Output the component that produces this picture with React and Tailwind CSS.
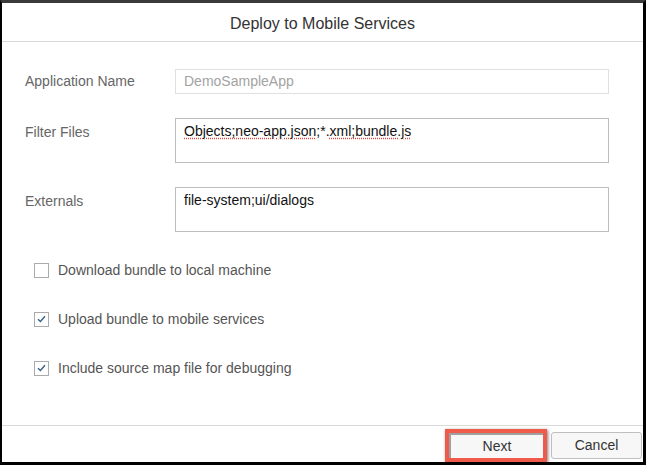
import React from 'react'

const font = { fontFamily: '"Liberation Sans", Arial, sans-serif' }

const Check = ({ checked, label }) => (
  <div className="flex items-center h-[20px]">
    <div className="w-[15px] h-[15px] border border-[#ababab] bg-white flex items-center justify-center ml-[9px]">
      {checked && (
        <svg width="9" height="8" viewBox="0 0 9 8">
          <path d="M1 4.2 L3.4 6.5 L8 1.2" fill="none" stroke="#346187" strokeWidth="1.4" />
        </svg>
      )}
    </div>
    <span className="ml-[9px] text-[14px] text-[#555]">{label}</span>
  </div>
)

const App = () => {
  return (
    <div className="w-[646px] h-[465px] bg-black" style={font}>
      <div className="h-full border-l-2 border-t-[3px] border-r-[3px] border-b-[3px] border-t-[#3a3a3a] border-l-black border-r-black border-b-black bg-white flex flex-col">
        {/* Header */}
        <div className="h-[39px] flex items-center justify-center border-b border-[#d9d9d9] pt-[3px]">
          <h1 className="text-[16px] text-[#333]">Deploy to Mobile Services</h1>
        </div>

        {/* Body */}
        <div className="flex-1 pl-[23px] pr-[34px] pt-[27px]">
          <div className="grid grid-cols-[150px_1fr] gap-y-[24px]">
            <div className="text-[14px] text-[#666] flex items-center">Application Name</div>
            <div className="h-[25px] border border-[#e0e0e0] px-[8px] flex items-center text-[14px] text-[#a3a3a3]">
              DemoSampleApp
            </div>

            <div className="text-[14px] text-[#666] pt-[4px]">Filter Files</div>
            <div className="h-[45px] border border-[#bdbdbd] px-[8px] pt-[2px] text-[14px] text-[#111]">
              <span className="underline decoration-dotted decoration-[#e0453a] underline-offset-2">Objects;neo-app.json</span>;*.
              <span className="underline decoration-dotted decoration-[#e0453a] underline-offset-2">xml;bundle.js</span>
            </div>

            <div className="text-[14px] text-[#666] pt-[4px]">Externals</div>
            <div className="h-[45px] border border-[#bdbdbd] px-[8px] pt-[2px] text-[14px] text-[#111]">
              file-system;ui/dialogs
            </div>
          </div>

          <div className="mt-[28px] flex flex-col gap-[29px]">
            <Check label="Download bundle to local machine" />
            <Check checked label="Upload bundle to mobile services" />
            <Check checked label="Include source map file for debugging" />
          </div>
        </div>

        {/* Footer */}
        <div className="h-[37px] border-t border-[#d9d9d9] flex items-center justify-end pr-[1px] gap-[4px] pt-[2px]">
          <div className="border-[4px] border-[#ef5a4b] shadow-[1px_1px_3px_rgba(0,0,0,0.5)]">
            <button className="w-[94px] h-[25px] bg-[#f7f7f7] border-l-2 border-t-2 border-[#666]/60 text-[14px] text-[#333]">
              Next
            </button>
          </div>
          <button className="w-[91px] h-[27px] bg-[#f7f7f7] border border-[#bfbfbf] rounded-[3px] text-[14px] text-[#333]">
            Cancel
          </button>
        </div>
      </div>
    </div>
  )
}

export default App
